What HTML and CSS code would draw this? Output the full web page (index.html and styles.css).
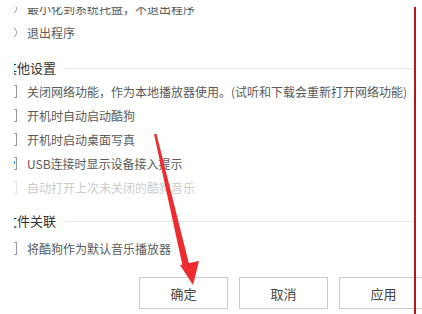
FILE: index.html
```html
<!DOCTYPE html>
<html lang="zh-CN">
<head>
    <meta charset="UTF-8">
    <title>设置</title>
    <link rel="stylesheet" href="styles.css">
</head>
<body>
    <div class="screen">
        <div class="clip">
            <div class="panel">
                <div class="option option-first">
                    <span class="radio"></span>
                    <span>最小化到系统托盘，不退出程序</span>
                </div>
                <div class="option">
                    <span class="radio"></span>
                    <span>退出程序</span>
                </div>

                <div class="section-title">
                    <span>其他设置</span>
                    <div class="rule"></div>
                </div>
                <div class="checks">
                    <div class="option">
                        <span class="box"></span>
                        <span>关闭网络功能，作为本地播放器使用。(试听和下载会重新打开网络功能)</span>
                    </div>
                    <div class="option">
                        <span class="box"></span>
                        <span>开机时自动启动酷狗</span>
                    </div>
                    <div class="option">
                        <span class="box"></span>
                        <span>开机时启动桌面写真</span>
                    </div>
                    <div class="option">
                        <span class="box checked"></span>
                        <span>USB连接时显示设备接入提示</span>
                    </div>
                    <div class="option disabled">
                        <span class="box"></span>
                        <span>自动打开上次未关闭的酷狗音乐</span>
                    </div>
                </div>

                <div class="section-title section-second">
                    <span>文件关联</span>
                    <div class="rule"></div>
                </div>
                <div class="checks checks-tight">
                    <div class="option">
                        <span class="box"></span>
                        <span>将酷狗作为默认音乐播放器</span>
                    </div>
                </div>

                <div class="buttons">
                    <button class="btn">确定</button>
                    <button class="btn">取消</button>
                    <button class="btn">应用</button>
                </div>
            </div>
        </div>

        <!-- window edge marker -->
        <div class="edge"></div>

        <!-- annotation arrow pointing at the OK button -->
        <svg class="arrow" width="422" height="314" viewBox="0 0 422 314">
            <polygon points="154,134 156.5,134 190,268 183,268" fill="#ee2b2e"/>
            <polygon points="180,265 199,261 193,285" fill="#ee2b2e"/>
        </svg>
    </div>
</body>
</html>
```

FILE: styles.css
```css
* {
    margin: 0;
    padding: 0;
    box-sizing: border-box;
}

body {
    background: #fff;
    font-family: "Noto Sans CJK SC", "Noto Sans", sans-serif;
    font-size: 12px;
    color: #5a5a5a;
}

.screen {
    position: relative;
    width: 422px;
    height: 314px;
    overflow: hidden;
}

.clip {
    margin: 7px 0 0 14px;
    height: 307px;
    overflow: hidden;
}

.panel {
    margin-left: -10px;
    width: 410px;
}

.option {
    display: flex;
    align-items: center;
    height: 22px;
    white-space: nowrap;
}

.option-first {
    margin-top: -10px;
}

.option-first + .option {
    margin-top: 2px;
}

.checks .option {
    height: 24px;
}

.radio {
    width: 13px;
    height: 13px;
    border: 1px solid #999;
    border-radius: 50%;
    margin-right: 10px;
    flex-shrink: 0;
}

.box {
    position: relative;
    width: 13px;
    height: 13px;
    border: 1px solid #999;
    margin-right: 10px;
    flex-shrink: 0;
}

.box.checked::after {
    content: "";
    position: absolute;
    right: 1px;
    top: 3px;
    width: 2px;
    height: 3px;
    background: #2a8ce6;
}

.disabled {
    color: #ccc;
}

.disabled .box {
    border-color: #e4e4e4;
}

.section-title {
    display: flex;
    align-items: center;
    height: 24px;
    margin-top: 12px;
    font-size: 13px;
    color: #333;
    white-space: nowrap;
}

.section-second {
    margin-top: 9px;
}

.rule {
    flex: 1;
    height: 1px;
    background: #e6e6e6;
    margin: 2px 0 0 9px;
}

.checks-tight {
    margin-top: 4px;
}

.buttons {
    display: flex;
    gap: 11px;
    margin: 17px 0 0 135px;
}

.btn {
    flex-shrink: 0;
    width: 89px;
    height: 32px;
    border: 1px solid #ccc;
    background: #fff;
    font-family: inherit;
    font-size: 13px;
    color: #444;
}

.edge {
    position: absolute;
    left: 414px;
    top: 7px;
    width: 2px;
    height: 307px;
    background: #b8161c;
}

.arrow {
    position: absolute;
    left: 0;
    top: 0;
}
```
